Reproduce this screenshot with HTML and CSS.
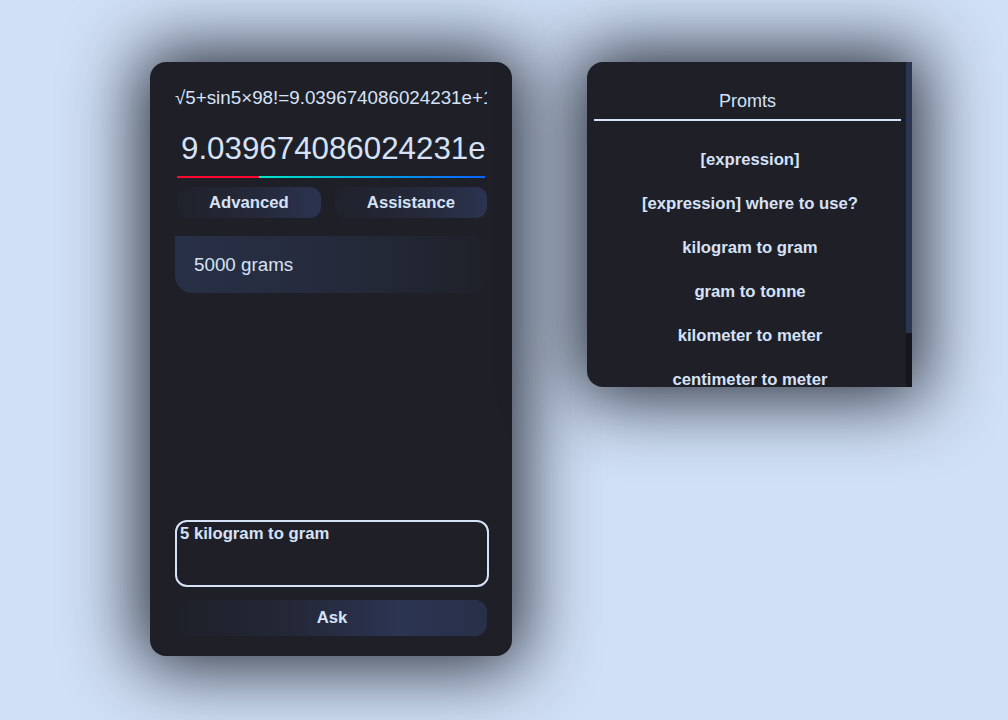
FILE: index.html
```html
<!DOCTYPE html>
<html lang="en">
<head>
<meta charset="utf-8">
<title>Calculator</title>
<link rel="stylesheet" href="styles.css">
</head>
<body>
<div class="desk">
  <section class="calc">
    <div class="expr">√5+sin5×98!=9.039674086024231e+155</div>
    <div class="result">9.039674086024231e+155</div>
    <div class="underline"></div>
    <div class="tabs">
      <button class="tab">Advanced</button>
      <button class="tab">Assistance</button>
    </div>
    <div class="answer">5000 grams</div>
    <div class="spacer"></div>
    <div class="query">5 kilogram to gram</div>
    <button class="ask">Ask</button>
  </section>
  <section class="prompts">
    <div class="prompts-scroll">
      <div class="prompts-title">Promts</div>
      <div class="prompts-rule"></div>
      <ul class="prompt-list">
        <li>[expression]</li>
        <li>[expression] where to use?</li>
        <li>kilogram to gram</li>
        <li>gram to tonne</li>
        <li>kilometer to meter</li>
        <li>centimeter to meter</li>
        <li>meter to kilometer</li>
      </ul>
    </div>
    <div class="scrollbar"><div class="thumb"></div></div>
  </section>
</div>
</body>
</html>
```
FILE: styles.css
```css
html, body {
  margin: 0;
  height: 100%;
}
body {
  background: #d0e0f6;
  font-family: "Liberation Sans", Arial, sans-serif;
  color: #d6e2f7;
  overflow: hidden;
}
.desk {
  display: flex;
  align-items: flex-start;
  gap: 75px;
  padding: 62px 0 0 150px;
}
.calc {
  width: 362px;
  height: 594px;
  box-sizing: border-box;
  padding: 25px 25px 20px;
  background: #1e1f27;
  border-radius: 16px;
  display: flex;
  flex-direction: column;
  box-shadow: 0 0 70px 12px rgba(18, 22, 32, 0.88);
}
.expr {
  font-size: 18.8px;
  line-height: 21px;
  white-space: nowrap;
  overflow: hidden;
}
.result {
  margin-top: 23px;
  padding: 0 2px 0 6px;
  font-size: 31.3px;
  line-height: 36px;
  white-space: nowrap;
  overflow: hidden;
}
.underline {
  margin: 9px 2px 0;
  height: 2px;
  background: linear-gradient(90deg, #ff0a2e 0, #ff0a2e 26.6%, #00e8c6 26.6%, #0a62ff 100%);
}
.tabs {
  margin-top: 9px;
  display: flex;
  gap: 14px;
  padding: 0 0 0 2px;
}
.tab {
  flex: 1 1 auto;
  height: 31px;
  border: none;
  border-radius: 11px;
  padding: 0 28px;
  font-family: inherit;
  font-size: 16.7px;
  font-weight: bold;
  color: #d6e2f7;
  background: linear-gradient(90deg, #1f212b 0%, #252a3b 60%, #2b3350 100%);
}
.answer {
  margin-top: 18px;
  height: 57px;
  display: flex;
  align-items: center;
  padding: 0 19px;
  font-size: 18.8px;
  border-radius: 0 18px 18px 18px;
  background: linear-gradient(90deg, #283047 0%, #242a3a 55%, #1f2129 100%);
}
.spacer {
  flex: 1;
}
.query {
  height: 67px;
  box-sizing: border-box;
  border: 2px solid #d6e2f7;
  border-radius: 12px;
  padding: 2px 3px;
  margin-right: -2px;
  font-size: 16.7px;
  font-weight: bold;
  line-height: 19px;
}
.ask {
  margin: 13px 0 0 2px;
  height: 36px;
  border: none;
  border-radius: 12px;
  font-family: inherit;
  font-size: 16.7px;
  font-weight: bold;
  color: #d6e2f7;
  background: linear-gradient(90deg, #1e2029 0%, #232736 35%, #2b3452 72%, #283048 100%);
}
.prompts {
  width: 325px;
  height: 325px;
  display: flex;
  background: #1e1f27;
  border-radius: 16px 0 0 16px;
  overflow: hidden;
  box-shadow: 0 0 70px 12px rgba(18, 22, 32, 0.88);
}
.prompts-scroll {
  flex: 1;
  overflow: hidden;
}
.scrollbar {
  width: 6px;
  background: #16171c;
}
.thumb {
  height: 271px;
  background: #2c3551;
}
.prompts-title {
  padding: 29px 0 0 2px;
  text-align: center;
  font-size: 18px;
  line-height: 21px;
}
.prompts-rule {
  margin: 7px 5px 0 7px;
  height: 2px;
  background: #d6e2f7;
}
.prompt-list {
  list-style: none;
  margin: 0;
  padding: 17px 0 0 7px;
}
.prompt-list li {
  height: 44px;
  line-height: 44px;
  text-align: center;
  font-size: 16.7px;
  font-weight: bold;
  white-space: nowrap;
}
```
